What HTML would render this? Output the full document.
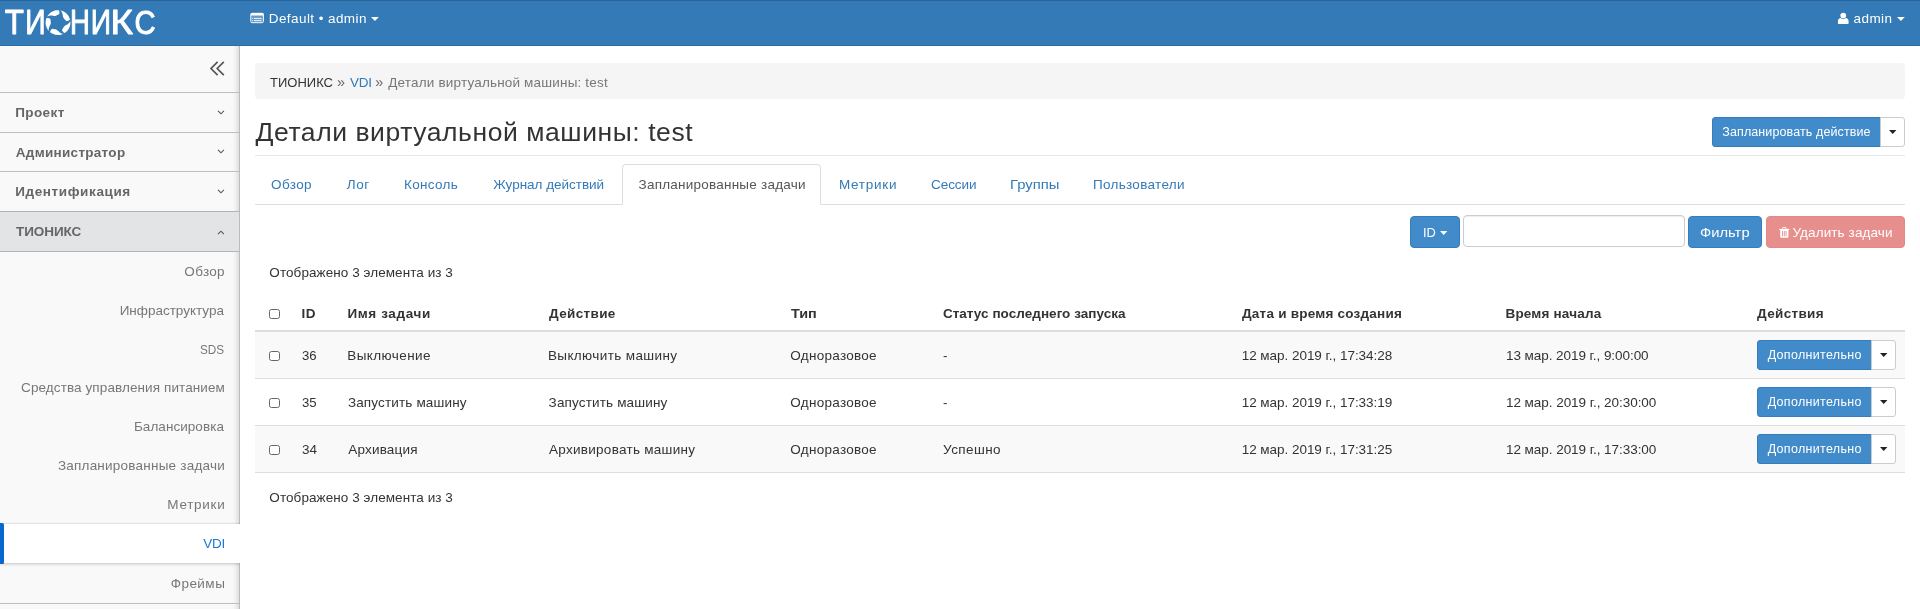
<!DOCTYPE html>
<html lang="ru">
<head>
<meta charset="utf-8">
<title>Детали виртуальной машины: test</title>
<style>
*{box-sizing:border-box;}
html,body{margin:0;padding:0;}
body{width:1920px;height:609px;overflow:hidden;background:#fff;color:#333;position:relative;
  font-family:"Liberation Sans","DejaVu Sans",sans-serif;font-size:13.5px;line-height:20px;}
.x{position:absolute;white-space:nowrap;line-height:20px;margin:0;font-weight:normal;text-decoration:none;display:block;font-family:"Liberation Sans","DejaVu Sans",sans-serif;}
.b{position:absolute;}
svg{position:absolute;overflow:visible;}
#nav{left:0;top:0;width:1920px;height:46px;background:#337ab7;border-top:1px solid #2a6496;border-bottom:1px solid #2e6da4;}
#side{left:0;top:46px;width:240px;height:563px;background:#f9f9f9;border-right:1px solid #bbb;box-shadow:inset -6px 0 5px -4px rgba(0,0,0,.13);}
.sl{left:0;width:239px;height:1px;background:#bebebe;}
#hact{left:0;top:211px;width:239px;height:41px;background:#e3e4e6;border-top:1px solid #b4b4b4;border-bottom:1px solid #b4b4b4;}
#vclip{left:0;top:510px;width:240px;height:70px;overflow:hidden;z-index:3;}
#vdi{left:0;top:14px;width:240px;height:39px;background:#fff;box-shadow:0 1px 3px rgba(0,0,0,.22),0 -1px 1px rgba(0,0,0,.05);}
#vdi i{position:absolute;left:0;top:-1px;width:4px;height:41px;background:#0768d0;border-radius:0 1.5px 1.5px 0;}
#bc{left:255px;top:63px;width:1650px;height:36px;background:#f5f5f5;border-radius:4px;}
.hr{left:255px;width:1650px;height:1px;background:#e7e7e7;}
.btn{border-radius:3px;background:#428bca;border:1px solid #357ebd;}
.dd{background:#fff;border:1px solid #ccc;border-radius:0 3px 3px 0;}
#tabact{left:622px;top:164px;width:199px;height:41px;border:1px solid #ddd;border-bottom:1px solid #fff;border-radius:4px 4px 0 0;background:#fff;}
.row{left:255px;width:1650px;height:47px;border-top:1px solid #ddd;}
.odd{background:#f9f9f9;}
.cb{width:11px;height:10.6px;border:1px solid #666;border-radius:2.5px;background:#fff;left:269px;}
</style>
</head>
<body>
<div id="wrap" style="position:absolute;left:0;top:0;width:1920px;height:609px;will-change:transform;">
<nav class="b" id="nav"></nav>
<aside class="b" id="side"></aside>
<!-- sidebar separators -->
<div class="b sl" style="top:92px"></div>
<div class="b sl" style="top:132px"></div>
<div class="b sl" style="top:171px"></div>
<div class="b" id="hact"></div>
<div class="b sl" style="top:603px"></div>
<div class="b" id="vclip"><div class="b" id="vdi"><i></i></div></div>
<!-- content -->
<div class="b" id="bc"></div>
<div class="b hr" style="top:155px"></div>
<div class="b" style="left:255px;top:204px;width:1650px;height:1px;background:#ddd"></div>
<div class="b" id="tabact"></div>
<!-- header action -->
<div class="b btn" style="left:1712px;top:117px;width:169px;height:30px;border-radius:3px 0 0 3px"></div>
<div class="b dd" style="left:1880px;top:117px;width:25px;height:30px"></div>
<!-- filter row -->
<div class="b btn" style="left:1410px;top:216px;width:50px;height:32px;border-radius:4px"></div>
<div class="b" style="left:1463px;top:215px;width:221.5px;height:32px;border:1px solid #ccc;border-radius:4px;background:#fff;box-shadow:inset 0 1px 1px rgba(0,0,0,.075)"></div>
<div class="b btn" style="left:1688px;top:216px;width:74px;height:32px;border-radius:4px"></div>
<div class="b" style="left:1766px;top:216px;width:139px;height:32px;border-radius:4px;background:#e68f8c;border:1px solid #e48985"></div>
<!-- table -->
<div class="b" style="left:255px;top:330px;width:1650px;height:2px;background:#ddd"></div>
<div class="b row odd" style="top:331px;border-top:none;height:47px"></div>
<div class="b row" style="top:378px"></div>
<div class="b row odd" style="top:425px"></div>
<div class="b" style="left:255px;top:472px;width:1650px;height:1px;background:#ddd"></div>
<div class="b" style="left:255px;top:330px;width:1650px;height:2px;background:#ddd"></div>
<div class="b cb" style="top:308.8px"></div>
<div class="b cb" style="top:350.6px"></div>
<div class="b cb" style="top:397.6px"></div>
<div class="b cb" style="top:444.6px"></div>
<!-- row buttons -->
<div class="b btn" style="left:1757px;top:340px;width:115px;height:30px;border-radius:3px 0 0 3px"></div>
<div class="b dd" style="left:1871px;top:340px;width:25px;height:30px"></div>
<div class="b btn" style="left:1757px;top:387px;width:115px;height:30px;border-radius:3px 0 0 3px"></div>
<div class="b dd" style="left:1871px;top:387px;width:25px;height:30px"></div>
<div class="b btn" style="left:1757px;top:434px;width:115px;height:30px;border-radius:3px 0 0 3px"></div>
<div class="b dd" style="left:1871px;top:434px;width:25px;height:30px"></div>
<svg class="b" style="left:0;top:0" width="160" height="46" viewBox="0 0 160 46" fill="#fff"><g font-family="Liberation Sans, sans-serif" stroke="#fff" stroke-linejoin="round" stroke-linecap="round"><text transform="matrix(0.3132 0 0 0.3457 4.82 34.10)" font-size="100" stroke-width="2.73">Т</text><text transform="matrix(0.2830 0 0 0.3507 25.19 34.45)" font-size="100" stroke-width="2.84">И</text><text transform="matrix(0.2754 0 0 0.3507 69.95 34.45)" font-size="100" stroke-width="2.87">Н</text><text transform="matrix(0.2821 0 0 0.3507 90.69 34.45)" font-size="100" stroke-width="2.84">И</text><text transform="matrix(0.3900 0 0 0.3457 110.23 34.45)" font-size="100" stroke-width="2.45">К</text><text transform="matrix(0.2922 0 0 0.3408 134.39 34.11)" font-size="100" stroke-width="2.84">С</text></g><g><path d="M47.05 16.78C47.16 16.59 47.48 16.02 47.72 15.67C47.96 15.31 48.22 14.96 48.50 14.63C48.78 14.30 49.08 13.98 49.39 13.68C49.70 13.38 50.03 13.09 50.37 12.83C50.71 12.56 51.06 12.31 51.43 12.08C51.80 11.86 52.18 11.64 52.56 11.45C52.95 11.27 53.35 11.10 53.76 10.95C54.16 10.80 54.58 10.67 55.00 10.57C55.42 10.46 55.85 10.38 56.27 10.32C56.70 10.26 57.23 10.23 57.57 10.21C57.91 10.19 58.11 10.17 58.32 10.20C58.54 10.24 58.70 10.25 58.85 10.43C59.00 10.61 59.14 10.92 59.23 11.27C59.32 11.61 59.37 12.12 59.38 12.49C59.40 12.87 59.40 13.20 59.33 13.50C59.26 13.79 59.19 14.04 58.95 14.25C58.71 14.47 58.28 14.60 57.86 14.80C57.45 15.00 56.89 15.28 56.48 15.46C56.07 15.64 55.80 15.79 55.42 15.88C55.04 15.97 54.63 16.02 54.20 16.02C53.77 16.01 53.34 15.92 52.83 15.86C52.31 15.79 51.72 15.64 51.13 15.61C50.55 15.58 49.86 15.60 49.31 15.69C48.77 15.78 48.26 15.97 47.88 16.15C47.50 16.33 47.19 16.67 47.05 16.78Z"/><path d="M60.15 10.39C60.36 10.44 61.00 10.56 61.42 10.68C61.83 10.80 62.24 10.94 62.65 11.10C63.05 11.26 63.44 11.45 63.82 11.65C64.20 11.85 64.58 12.08 64.93 12.32C65.29 12.56 65.64 12.82 65.97 13.10C66.30 13.38 66.62 13.68 66.92 13.99C67.22 14.30 67.51 14.63 67.77 14.97C68.04 15.31 68.29 15.66 68.52 16.03C68.74 16.40 68.96 16.78 69.15 17.16C69.33 17.55 69.53 18.04 69.65 18.36C69.78 18.68 69.86 18.86 69.89 19.08C69.92 19.29 69.96 19.45 69.84 19.65C69.72 19.85 69.46 20.08 69.16 20.27C68.86 20.46 68.39 20.66 68.04 20.79C67.69 20.92 67.37 21.03 67.07 21.05C66.77 21.07 66.51 21.09 66.23 20.93C65.95 20.76 65.69 20.39 65.38 20.06C65.06 19.73 64.62 19.28 64.32 18.95C64.03 18.62 63.80 18.40 63.60 18.07C63.39 17.74 63.22 17.36 63.09 16.95C62.96 16.54 62.91 16.10 62.81 15.59C62.72 15.09 62.68 14.47 62.53 13.91C62.37 13.34 62.14 12.69 61.89 12.20C61.63 11.72 61.29 11.28 61.00 10.98C60.72 10.68 60.30 10.49 60.15 10.39Z"/><path d="M70.28 20.87C70.30 21.09 70.38 21.74 70.39 22.17C70.41 22.60 70.40 23.03 70.37 23.46C70.34 23.90 70.29 24.33 70.21 24.75C70.14 25.18 70.04 25.60 69.92 26.02C69.80 26.43 69.66 26.84 69.50 27.25C69.34 27.65 69.15 28.04 68.95 28.42C68.75 28.80 68.52 29.18 68.28 29.53C68.04 29.89 67.78 30.24 67.50 30.57C67.22 30.90 66.92 31.22 66.61 31.52C66.30 31.82 65.90 32.15 65.63 32.37C65.37 32.59 65.22 32.72 65.02 32.82C64.83 32.91 64.69 33.00 64.47 32.95C64.24 32.89 63.94 32.72 63.67 32.49C63.39 32.27 63.05 31.88 62.82 31.59C62.59 31.30 62.39 31.03 62.28 30.75C62.16 30.47 62.07 30.23 62.14 29.91C62.21 29.59 62.48 29.23 62.69 28.83C62.91 28.42 63.20 27.87 63.42 27.48C63.65 27.10 63.79 26.82 64.04 26.52C64.29 26.22 64.59 25.94 64.94 25.69C65.29 25.44 65.70 25.26 66.15 25.01C66.60 24.77 67.18 24.54 67.67 24.22C68.16 23.90 68.70 23.48 69.09 23.08C69.47 22.69 69.78 22.24 69.98 21.87C70.18 21.50 70.23 21.04 70.28 20.87Z"/><path d="M63.44 33.75C63.24 33.83 62.65 34.10 62.24 34.25C61.84 34.40 61.42 34.53 61.00 34.63C60.58 34.74 60.15 34.82 59.73 34.88C59.30 34.94 58.86 34.98 58.43 34.99C58.00 35.01 57.57 35.00 57.14 34.97C56.70 34.94 56.27 34.89 55.85 34.81C55.42 34.74 55.00 34.64 54.58 34.52C54.17 34.40 53.76 34.26 53.35 34.10C52.95 33.94 52.56 33.75 52.18 33.55C51.80 33.35 51.35 33.07 51.07 32.88C50.78 32.69 50.60 32.59 50.45 32.44C50.30 32.28 50.18 32.18 50.16 31.95C50.14 31.71 50.21 31.38 50.34 31.05C50.47 30.71 50.73 30.27 50.94 29.96C51.15 29.65 51.34 29.38 51.57 29.18C51.81 28.99 52.00 28.83 52.33 28.79C52.65 28.76 53.08 28.91 53.53 28.99C53.98 29.07 54.60 29.17 55.03 29.27C55.47 29.36 55.77 29.41 56.14 29.55C56.50 29.70 56.86 29.90 57.21 30.16C57.55 30.42 57.85 30.74 58.22 31.10C58.60 31.45 58.99 31.93 59.45 32.29C59.91 32.66 60.47 33.05 60.97 33.30C61.46 33.54 61.99 33.69 62.40 33.77C62.81 33.84 63.26 33.75 63.44 33.75Z"/><path d="M49.08 31.21C48.94 31.05 48.49 30.57 48.23 30.23C47.96 29.89 47.71 29.54 47.48 29.17C47.26 28.80 47.04 28.42 46.85 28.04C46.67 27.65 46.50 27.25 46.35 26.84C46.20 26.44 46.07 26.02 45.97 25.60C45.86 25.18 45.78 24.75 45.72 24.33C45.66 23.90 45.62 23.46 45.61 23.03C45.59 22.60 45.60 22.17 45.63 21.74C45.66 21.30 45.71 20.87 45.79 20.45C45.86 20.02 45.99 19.51 46.08 19.18C46.17 18.85 46.21 18.65 46.31 18.46C46.41 18.27 46.47 18.12 46.69 18.03C46.90 17.94 47.25 17.91 47.60 17.93C47.96 17.95 48.46 18.06 48.82 18.16C49.18 18.26 49.50 18.36 49.75 18.52C50.01 18.68 50.22 18.82 50.36 19.12C50.49 19.42 50.48 19.87 50.54 20.32C50.60 20.77 50.70 21.39 50.74 21.84C50.78 22.28 50.84 22.59 50.81 22.98C50.78 23.37 50.70 23.77 50.57 24.18C50.43 24.59 50.21 24.97 49.99 25.44C49.76 25.90 49.44 26.42 49.23 26.97C49.02 27.52 48.83 28.18 48.74 28.73C48.66 29.27 48.68 29.82 48.74 30.23C48.80 30.65 49.02 31.05 49.08 31.21Z"/></g></svg>
<!-- nav icons -->
<svg class="b" style="left:250px;top:12px" width="14" height="12" viewBox="0 0 14 12"><rect x="0.8" y="1.3" width="12.6" height="9.4" rx="1.3" fill="none" stroke="#fff" stroke-width="1"/><rect x="0.8" y="1" width="12.6" height="2.6" fill="#fff"/><rect x="4" y="5.9" width="7.6" height="1" fill="#fff" opacity=".9"/><rect x="4" y="8.1" width="7.6" height="1" fill="#fff" opacity=".9"/><rect x="2.2" y="5.9" width="1" height="1" fill="#fff" opacity=".8"/><rect x="2.2" y="8.1" width="1" height="1" fill="#fff" opacity=".8"/><rect x="1.3" y="3.6" width="11.6" height="6.6" fill="#fff" opacity=".25"/></svg>
<svg class="b" style="left:370.6px;top:17px" width="8" height="4" viewBox="0 0 8 4"><path d="M0 0H7.8L3.9 4Z" fill="#fff"/></svg>
<svg class="b" style="left:1837px;top:12px" width="13" height="13" viewBox="0 0 13 13"><circle cx="6.25" cy="3.5" r="2.85" fill="#fff"/><path d="M0.9 10.9V9.2C0.9 7.3 2.3 6.2 3.6 6.1C4.4 6.7 5.3 7 6.25 7C7.2 7 8.1 6.7 8.9 6.1C10.2 6.2 11.6 7.3 11.6 9.2V10.9Q11.6 12.1 10.4 12.1H2.1Q0.9 12.1 0.9 10.9Z" fill="#fff"/></svg>
<svg class="b" style="left:1896.7px;top:17px" width="8" height="4" viewBox="0 0 8 4"><path d="M0 0H7.8L3.9 4Z" fill="#fff"/></svg>
<!-- sidebar toggle + chevrons -->
<svg class="b" style="left:209px;top:60px" width="17" height="17" viewBox="0 0 17 17" fill="none" stroke="#555" stroke-width="1.7"><path d="M8.6 1.8L2 8.5L8.6 15.2"/><path d="M14.8 1.8L8.2 8.5L14.8 15.2"/></svg>
<svg class="b" style="left:217px;top:109.5px" width="8" height="5" viewBox="0 0 8 5" fill="none" stroke="#555" stroke-width="1.15"><path d="M1 0.9L3.95 3.8L6.9 0.9"/></svg>
<svg class="b" style="left:217px;top:149.1px" width="8" height="5" viewBox="0 0 8 5" fill="none" stroke="#555" stroke-width="1.15"><path d="M1 0.9L3.95 3.8L6.9 0.9"/></svg>
<svg class="b" style="left:217px;top:188.7px" width="8" height="5" viewBox="0 0 8 5" fill="none" stroke="#555" stroke-width="1.15"><path d="M1 0.9L3.95 3.8L6.9 0.9"/></svg>
<svg class="b" style="left:217px;top:229.8px" width="8" height="5" viewBox="0 0 8 5" fill="none" stroke="#555" stroke-width="1.15"><path d="M1 4.1L3.95 1.2L6.9 4.1"/></svg>
<!-- button carets -->
<svg class="b" style="left:1889px;top:130px" width="8" height="4" viewBox="0 0 8 4"><path d="M0 0H7.4L3.7 4Z" fill="#222"/></svg>
<svg class="b" style="left:1439.8px;top:230.8px" width="8" height="4" viewBox="0 0 8 4"><path d="M0 0H7.4L3.7 4Z" fill="#fff"/></svg>
<svg class="b" style="left:1880px;top:353px" width="8" height="4" viewBox="0 0 8 4"><path d="M0 0H7.4L3.7 4Z" fill="#222"/></svg>
<svg class="b" style="left:1880px;top:400px" width="8" height="4" viewBox="0 0 8 4"><path d="M0 0H7.4L3.7 4Z" fill="#222"/></svg>
<svg class="b" style="left:1880px;top:447px" width="8" height="4" viewBox="0 0 8 4"><path d="M0 0H7.4L3.7 4Z" fill="#222"/></svg>
<!-- trash -->
<svg class="b" style="left:1778.5px;top:227px" width="11" height="11" viewBox="0 0 11 11"><path d="M3.6 1.9V1.2Q3.6 0.5 4.3 0.5H6.3Q7 0.5 7 1.2V1.9" fill="none" stroke="#fff" stroke-width="1"/><rect x="0.3" y="1.9" width="10" height="1.1" fill="#fff"/><path d="M1.2 3H9.4V9.8Q9.4 10.8 8.4 10.8H2.2Q1.2 10.8 1.2 9.8Z" fill="#fff"/><rect x="3.1" y="4" width="0.9" height="5.2" fill="#e68f8c"/><rect x="4.85" y="4" width="0.9" height="5.2" fill="#e68f8c"/><rect x="6.6" y="4" width="0.9" height="5.2" fill="#e68f8c"/></svg>

<span class="x" style="left:268.75px;top:8.50px;font-size:13.5px;color:#fff;letter-spacing:0.424px;">Default • admin</span>
<span class="x" style="left:1853.58px;top:8.50px;font-size:13.5px;color:#fff;letter-spacing:0.403px;">admin</span>
<span class="x" style="left:15.16px;top:102.50px;font-size:13.5px;color:#666;letter-spacing:0.411px;font-weight:bold;">Проект</span>
<span class="x" style="left:15.79px;top:142.50px;font-size:13.5px;color:#666;letter-spacing:0.291px;font-weight:bold;">Администратор</span>
<span class="x" style="left:15.16px;top:181.50px;font-size:13.5px;color:#666;letter-spacing:0.614px;font-weight:bold;">Идентификация</span>
<span class="x" style="left:16.00px;top:221.50px;font-size:13.5px;color:#666;letter-spacing:-0.076px;font-weight:bold;">ТИОНИКС</span>
<a class="x" style="left:184.37px;top:261.50px;font-size:13.5px;color:#777777;letter-spacing:0.297px;">Обзор</a>
<a class="x" style="left:119.65px;top:300.50px;font-size:13.5px;color:#777777;letter-spacing:-0.005px;">Инфраструктура</a>
<a class="x" style="left:200.33px;top:339.50px;font-size:13.5px;color:#777777;letter-spacing:0.000px;transform:scaleX(0.8704);transform-origin:0 0;">SDS</a>
<a class="x" style="left:21.07px;top:377.50px;font-size:13.5px;color:#777777;letter-spacing:0.099px;">Средства управления питанием</a>
<a class="x" style="left:133.95px;top:416.50px;font-size:13.5px;color:#777777;letter-spacing:0.052px;">Балансировка</a>
<a class="x" style="left:57.88px;top:455.50px;font-size:13.5px;color:#777777;letter-spacing:0.228px;">Запланированные задачи</a>
<a class="x" style="left:167.25px;top:494.50px;font-size:13.5px;color:#777777;letter-spacing:0.735px;">Метрики</a>
<a class="x" style="left:203.30px;top:533.50px;font-size:13.5px;color:#1f78d1;letter-spacing:-0.292px;z-index:5;">VDI</a>
<a class="x" style="left:170.67px;top:573.50px;font-size:13.5px;color:#777777;letter-spacing:0.474px;">Фреймы</a>
<span class="x" style="left:269.80px;top:72.50px;font-size:13.5px;color:#333;letter-spacing:0.000px;transform:scaleX(0.9631);transform-origin:0 0;">ТИОНИКС</span>
<span class="x" style="left:337.05px;top:72.00px;font-size:14.5px;color:#666;letter-spacing:0.000px;">»</span>
<a class="x" style="left:350.00px;top:72.50px;font-size:13.5px;color:#337ab7;letter-spacing:-0.292px;">VDI</a>
<span class="x" style="left:375.35px;top:72.00px;font-size:14.5px;color:#666;letter-spacing:0.000px;">»</span>
<span class="x" style="left:388.30px;top:72.50px;font-size:13.5px;color:#777;letter-spacing:0.178px;">Детали виртуальной машины: test</span>
<h1 class="x" style="left:255.50px;top:122.00px;font-size:26.5px;color:#333;letter-spacing:0.566px;">Детали виртуальной машины: test</h1>
<span class="x" style="left:1722.30px;top:122.00px;font-size:12.5px;color:#fff;letter-spacing:0.109px;">Запланировать действие</span>
<a class="x" style="left:271.07px;top:174.50px;font-size:13.5px;color:#337ab7;letter-spacing:0.372px;">Обзор</a>
<a class="x" style="left:346.70px;top:174.50px;font-size:13.5px;color:#337ab7;letter-spacing:0.646px;">Лог</a>
<a class="x" style="left:403.95px;top:174.50px;font-size:13.5px;color:#337ab7;letter-spacing:0.333px;">Консоль</a>
<a class="x" style="left:493.30px;top:174.50px;font-size:13.5px;color:#337ab7;letter-spacing:-0.024px;">Журнал действий</a>
<span class="x" style="left:638.58px;top:174.50px;font-size:13.5px;color:#555;letter-spacing:0.228px;">Запланированные задачи</span>
<a class="x" style="left:838.95px;top:174.50px;font-size:13.5px;color:#337ab7;letter-spacing:0.735px;">Метрики</a>
<a class="x" style="left:931.07px;top:174.50px;font-size:13.5px;color:#337ab7;letter-spacing:-0.083px;">Сессии</a>
<a class="x" style="left:1009.84px;top:174.50px;font-size:13.5px;color:#337ab7;letter-spacing:0.000px;transform:scaleX(1.0979);transform-origin:0 0;">Группы</a>
<a class="x" style="left:1092.95px;top:174.50px;font-size:13.5px;color:#337ab7;letter-spacing:0.312px;">Пользователи</a>
<span class="x" style="left:1423.00px;top:222.50px;font-size:13.5px;color:#fff;letter-spacing:0.000px;transform:scaleX(0.9518);transform-origin:0 0;">ID</span>
<span class="x" style="left:1700.31px;top:222.50px;font-size:13.5px;color:#fff;letter-spacing:0.000px;transform:scaleX(1.0935);transform-origin:0 0;">Фильтр</span>
<span class="x" style="left:1792.49px;top:222.50px;font-size:13.5px;color:#fff;letter-spacing:0.104px;">Удалить задачи</span>
<span class="x" style="left:269.37px;top:262.50px;font-size:13.5px;color:#333;letter-spacing:0.067px;">Отображено 3 элемента из 3</span>
<span class="x" style="left:269.37px;top:487.50px;font-size:13.5px;color:#333;letter-spacing:0.067px;">Отображено 3 элемента из 3</span>
<span class="x" style="left:301.46px;top:303.50px;font-size:13.5px;color:#333;letter-spacing:0.512px;font-weight:bold;">ID</span>
<span class="x" style="left:347.46px;top:303.50px;font-size:13.5px;color:#333;letter-spacing:0.614px;font-weight:bold;">Имя задачи</span>
<span class="x" style="left:549.00px;top:303.50px;font-size:13.5px;color:#333;letter-spacing:0.360px;font-weight:bold;">Действие</span>
<span class="x" style="left:791.00px;top:303.50px;font-size:13.5px;color:#333;letter-spacing:0.000px;font-weight:bold;transform:scaleX(1.0677);transform-origin:0 0;">Тип</span>
<span class="x" style="left:942.88px;top:303.50px;font-size:13.5px;color:#333;letter-spacing:0.043px;font-weight:bold;">Статус последнего запуска</span>
<span class="x" style="left:1242.00px;top:303.50px;font-size:13.5px;color:#333;letter-spacing:0.234px;font-weight:bold;">Дата и время создания</span>
<span class="x" style="left:1505.46px;top:303.50px;font-size:13.5px;color:#333;letter-spacing:0.187px;font-weight:bold;">Время начала</span>
<span class="x" style="left:1757.00px;top:303.50px;font-size:13.5px;color:#333;letter-spacing:0.347px;font-weight:bold;">Действия</span>
<span class="x" style="left:301.89px;top:345.50px;font-size:13.5px;color:#333;letter-spacing:0.000px;transform:scaleX(0.9753);transform-origin:0 0;">36</span>
<span class="x" style="left:347.25px;top:345.50px;font-size:13.5px;color:#333;letter-spacing:0.421px;">Выключение</span>
<span class="x" style="left:547.95px;top:345.50px;font-size:13.5px;color:#333;letter-spacing:0.378px;">Выключить машину</span>
<span class="x" style="left:790.37px;top:345.50px;font-size:13.5px;color:#333;letter-spacing:0.269px;">Одноразовое</span>
<span class="x" style="left:942.88px;top:345.50px;font-size:13.5px;color:#333;letter-spacing:0.000px;">-</span>
<span class="x" style="left:1241.66px;top:345.50px;font-size:13.5px;color:#333;letter-spacing:-0.035px;">12 мар. 2019 г., 17:34:28</span>
<span class="x" style="left:1505.96px;top:345.50px;font-size:13.5px;color:#333;letter-spacing:-0.054px;">13 мар. 2019 г., 9:00:00</span>
<span class="x" style="left:1767.65px;top:345.00px;font-size:12.5px;color:#fff;letter-spacing:0.324px;">Дополнительно</span>
<span class="x" style="left:301.89px;top:392.50px;font-size:13.5px;color:#333;letter-spacing:0.000px;transform:scaleX(0.9753);transform-origin:0 0;">35</span>
<span class="x" style="left:347.88px;top:392.50px;font-size:13.5px;color:#333;letter-spacing:0.150px;">Запустить машину</span>
<span class="x" style="left:548.58px;top:392.50px;font-size:13.5px;color:#333;letter-spacing:0.156px;">Запустить машину</span>
<span class="x" style="left:790.37px;top:392.50px;font-size:13.5px;color:#333;letter-spacing:0.269px;">Одноразовое</span>
<span class="x" style="left:942.88px;top:392.50px;font-size:13.5px;color:#333;letter-spacing:0.000px;">-</span>
<span class="x" style="left:1241.66px;top:392.50px;font-size:13.5px;color:#333;letter-spacing:-0.035px;">12 мар. 2019 г., 17:33:19</span>
<span class="x" style="left:1505.96px;top:392.50px;font-size:13.5px;color:#333;letter-spacing:-0.044px;">12 мар. 2019 г., 20:30:00</span>
<span class="x" style="left:1767.65px;top:392.00px;font-size:12.5px;color:#fff;letter-spacing:0.324px;">Дополнительно</span>
<span class="x" style="left:301.88px;top:439.50px;font-size:13.5px;color:#333;letter-spacing:0.142px;">34</span>
<span class="x" style="left:348.30px;top:439.50px;font-size:13.5px;color:#333;letter-spacing:0.176px;">Архивация</span>
<span class="x" style="left:549.00px;top:439.50px;font-size:13.5px;color:#333;letter-spacing:0.281px;">Архивировать машину</span>
<span class="x" style="left:790.37px;top:439.50px;font-size:13.5px;color:#333;letter-spacing:0.269px;">Одноразовое</span>
<span class="x" style="left:943.09px;top:439.50px;font-size:13.5px;color:#333;letter-spacing:0.404px;">Успешно</span>
<span class="x" style="left:1241.66px;top:439.50px;font-size:13.5px;color:#333;letter-spacing:-0.035px;">12 мар. 2019 г., 17:31:25</span>
<span class="x" style="left:1505.96px;top:439.50px;font-size:13.5px;color:#333;letter-spacing:-0.044px;">12 мар. 2019 г., 17:33:00</span>
<span class="x" style="left:1767.65px;top:439.00px;font-size:12.5px;color:#fff;letter-spacing:0.324px;">Дополнительно</span>
</div>
</body>
</html>
